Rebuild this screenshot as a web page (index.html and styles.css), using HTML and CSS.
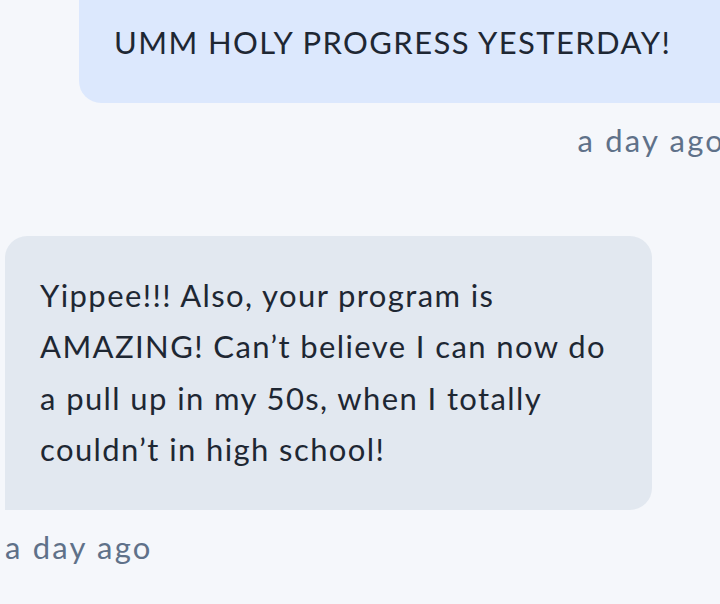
FILE: index.html
```html
<!DOCTYPE html>
<html lang="en">

<head>
    <meta charset="UTF-8">
    <meta name="viewport" content="width=device-width, initial-scale=1.0">
    <title>Messages</title>
    <link rel="stylesheet" href="styles.css">
</head>

<body>
    <div class="thread">
        <div class="message outgoing">
            <div class="bubble">UMM HOLY PROGRESS YESTERDAY!</div>
            <div class="time">a day ago</div>
        </div>

        <div class="message incoming">
            <div class="bubble">Yippee!!! Also, your program is AMAZING! Can’t believe I can now do a pull up in my 50s, when I totally couldn’t in high school!</div>
            <div class="time">a day ago</div>
        </div>
    </div>
</body>

</html>
```

FILE: styles.css
```css
html,
body {
    margin: 0;
    padding: 0;
    overflow: hidden;
}

body {
    font-family: Lato, "Open Sans", sans-serif;
    background-color: #f5f7fb;
    color: #1e2733;
}

.thread {
    width: 720px;
    margin-left: 5px;
    display: flex;
    flex-direction: column;
}

.message {
    display: flex;
    flex-direction: column;
}

.message + .message {
    margin-top: 78px;
}

.bubble {
    font-size: 31px;
    line-height: 51.5px;
    letter-spacing: 1.4px;
    padding: 34px 35px;
    box-sizing: border-box;
}

.outgoing {
    align-items: flex-end;
}

.outgoing .bubble {
    width: 646px;
    padding-top: 17px;
    background-color: #dce8fd;
    border-radius: 0 0 0 22px;
}

.incoming {
    align-items: flex-start;
}

.incoming .bubble {
    width: 647px;
    background-color: #e2e8f0;
    border-radius: 22px 22px 22px 0;
}

.time {
    margin-top: 19px;
    font-size: 31px;
    line-height: 36px;
    letter-spacing: 2.2px;
    color: #5f7189;
}
```
